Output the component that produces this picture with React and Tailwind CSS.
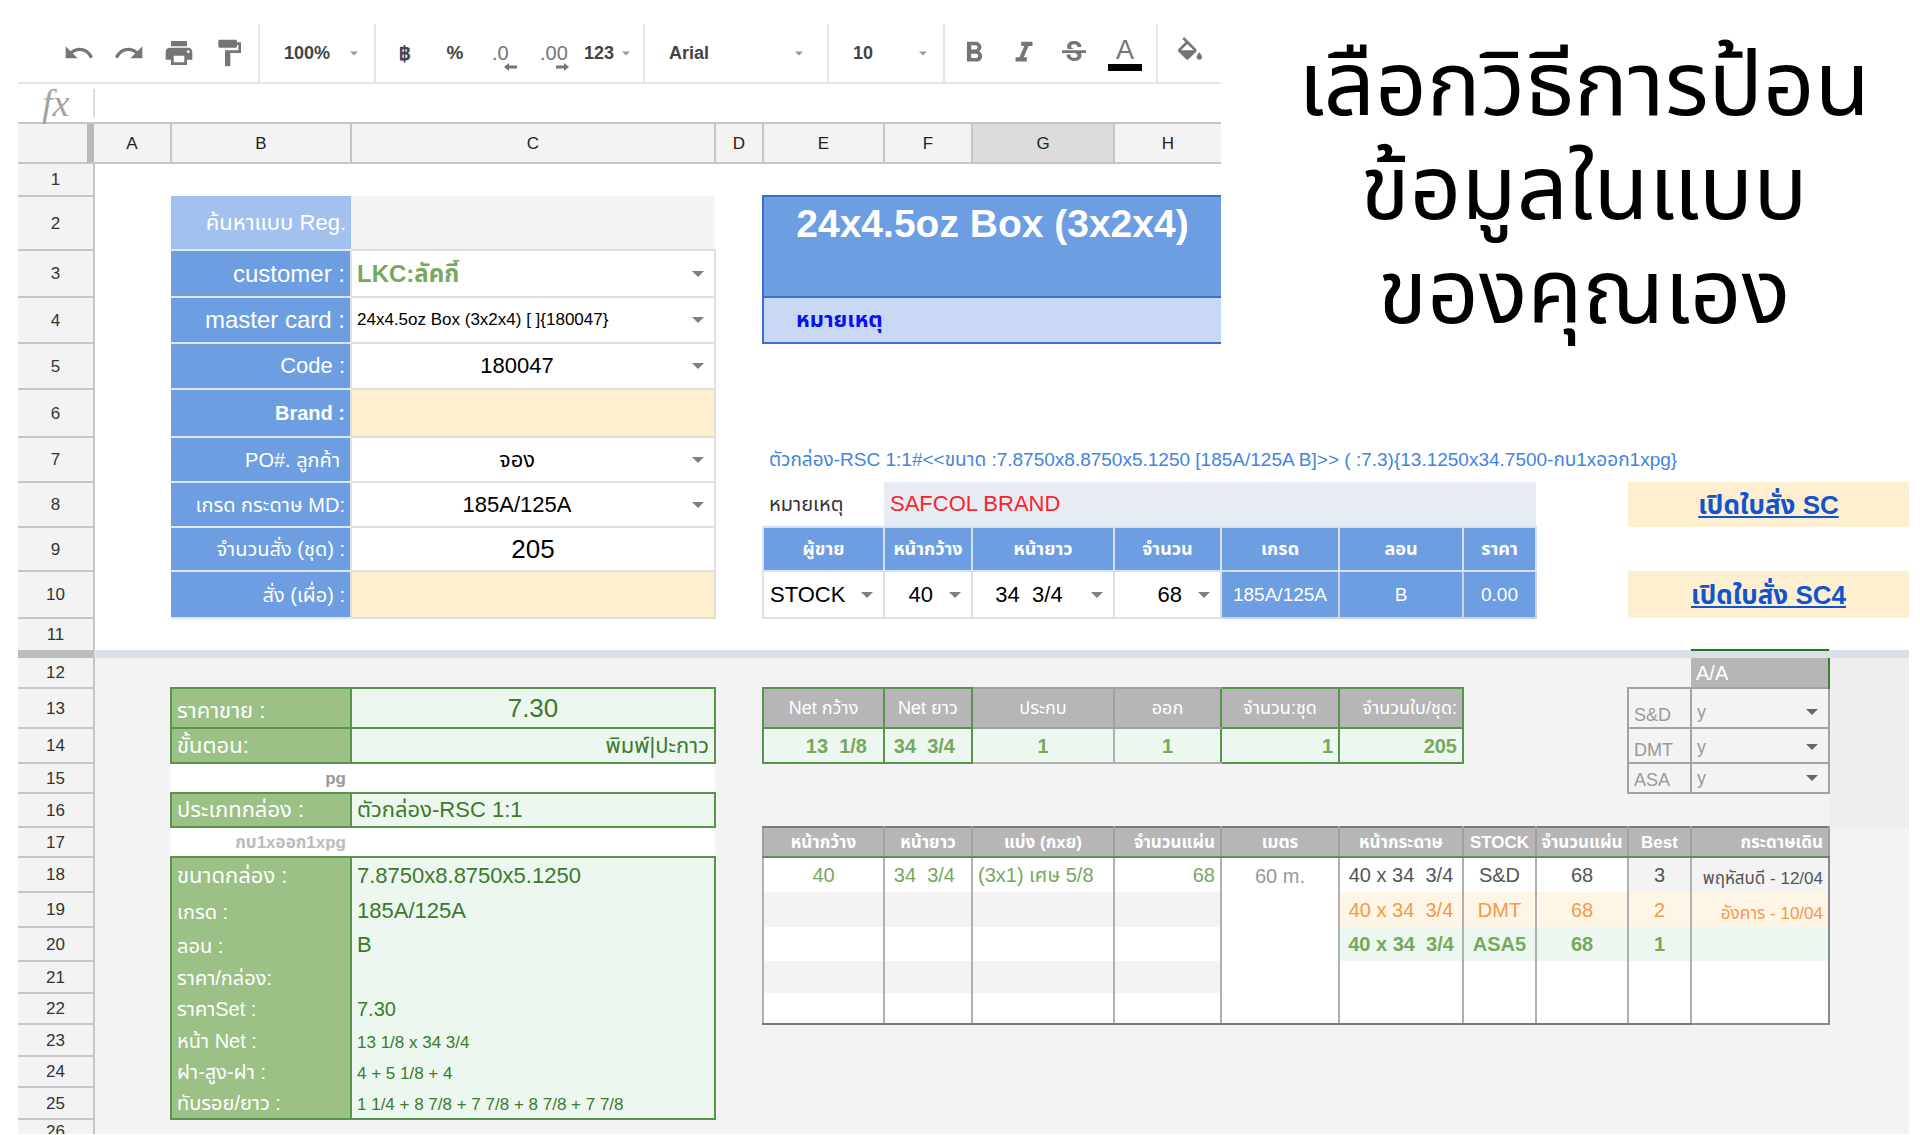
import React from "react";
import {
  MdPrint, MdFormatPaint, MdFormatBold, MdFormatItalic, MdStrikethroughS
} from "react-icons/md";

const columns = [
  { name: "A", width: "w-[77px]" },
  { name: "B", width: "w-[180px]" },
  { name: "C", width: "w-[364px]" },
  { name: "D", width: "w-[48px]" },
  { name: "E", width: "w-[121px]" },
  { name: "F", width: "w-[88px]" },
  { name: "G", width: "w-[142px]", selected: true },
  { name: "H", width: "w-[107px]" },
  { name: "I", width: "w-[118px]" },
  { name: "J", width: "w-[124px]" },
  { name: "K", width: "w-[73px]" },
  { name: "L", width: "w-[92px]" },
  { name: "M", width: "w-[63px]" },
  { name: "N", width: "w-[138px]" },
  { name: "O", width: "w-[80px]" },
];

const blueLabel = "bg-[#6c9ee1] text-white text-right pr-[5px] border-y-2 border-[#dde8f8]";
const blueHead = "bg-[#6c9ee1] text-white text-center font-bold text-[18px] border-2 border-[#d5e1f4]";
const blueCell = "bg-[#6c9ee1] text-white text-center text-[19px] border-2 border-[#c9d3e2]";
const whiteCell = "bg-white p-0 border-2 border-[#e0e0e0]";
const creamCell = "bg-[#feefd1] p-0 border-2 border-[#e3ddd0]";
const greenLabel = "bg-[#9cc187] text-white px-[5px] pb-[5px] align-bottom";
const greenValue = "bg-[#ecf7ef] text-[#3c7a2c] px-[5px] pb-[5px] align-bottom";
const greenBox = "border-2 border-[#5a9350]";
const greenSides = "border-x-2 border-[#5a9350]";
const greyHead = "bg-[#b6b6b6] text-white text-[18px]";
const netValue = "bg-[#ecf7ef] text-[#76a85f] font-bold text-[20px]";
const sheetHead = "bg-[#b6b6b6] text-white text-[17px] font-bold border-x-2 border-x-[#a0a0a0] border-t-2 border-t-[#7a7a7a] border-b-2 border-b-[#5f9154]";
const sheetCell = "border-x-2 border-[#b0b0b0] text-[20px] whitespace-pre";
const supplierName = "border-2 border-[#a3a3a3] text-[#999] text-[18px] px-[5px] pb-[3px] align-bottom";
const dateCell = "border-x-2 border-[#8a8a8a] text-right pr-[5px] pb-[5px] align-bottom text-[17px] whitespace-nowrap";

function Caret({ className }) {
  return (
    <svg viewBox="0 0 12 6" className={`pointer-events-none ${className}`} fill="currentColor" aria-hidden="true">
      <path d="M0 0h12L6 6z" />
    </svg>
  );
}

function CellSelect({ id, label, value, className, caret = "text-[#7f7f7f]" }) {
  return (
    <div className="relative flex items-center">
      <select id={id} aria-label={label} defaultValue={value}
        className={`block w-full appearance-none bg-transparent leading-7 outline-none whitespace-pre ${className}`}>
        <option value={value}>{value}</option>
      </select>
      <Caret className={`absolute right-[10px] w-3 h-[6px] ${caret}`} />
    </div>
  );
}

function Row({ n, height, className = "", children }) {
  return (
    <tr className={`${height} ${className}`}>
      <th scope="row" className="bg-[#f3f3f3] text-[#333] text-[17px] font-normal border-b-2 border-r-2 border-[#c6c6c6]">{n}</th>
      {children}
    </tr>
  );
}

function Group({ className = "", children }) {
  return <div className={`flex items-center shrink-0 border-r-2 border-[#e5e5e5] ${className}`}>{children}</div>;
}

function ToolButton({ label, className = "", children }) {
  return (
    <button type="button" aria-label={label} className={`flex items-center shrink-0 ${className}`}>
      {children}
    </button>
  );
}

function Toolbar() {
  return (
    <div className="flex h-[60px] border-b-2 border-[#e5e5e5] text-[#757575] text-[18px] overflow-hidden">
      <Group className="w-[242px] pl-9">
        <ToolButton label="Undo" className="w-[50px] justify-center">
          <svg viewBox="0 0 24 24" className="w-8 h-8" fill="currentColor">
            <path d="M12.500 8c-2.650 0-5.050.99-6.900 2.600L2 7v9h9l-3.620-3.620c1.390-1.160 3.160-1.880 5.120-1.880 3.540 0 6.550 2.310 7.600 5.500l2.370-.78C21.080 11.030 17.150 8 12.500 8z" />
          </svg>
        </ToolButton>
        <ToolButton label="Redo" className="w-[50px] justify-center">
          <svg viewBox="0 0 24 24" className="w-8 h-8" fill="currentColor">
            <path d="M18.400 10.600C16.550 8.990 14.150 8 11.500 8c-4.650 0-8.580 3.030-9.960 7.220L3.900 16c1.050-3.190 4.050-5.500 7.600-5.500 1.950 0 3.730.72 5.120 1.880L13 16h9V7l-3.600 3.600z" />
          </svg>
        </ToolButton>
        <ToolButton label="Print" className="w-[50px] justify-center"><MdPrint size={32} /></ToolButton>
        <ToolButton label="Paint format" className="w-[50px] justify-center"><MdFormatPaint size={32} /></ToolButton>
      </Group>
      <Group className="w-[116px] pl-6">
        <ToolButton label="Zoom" className="gap-5 font-bold text-[#444]">
          100%<Caret className="w-2 h-[5px] text-[#999]" />
        </ToolButton>
      </Group>
      <Group className="w-[269px] pl-1">
        <ToolButton label="Currency" className="w-[50px] justify-center font-bold text-[22px] text-[#445]">฿</ToolButton>
        <ToolButton label="Percent" className="w-[50px] justify-center font-bold text-[19px] text-[#444]">%</ToolButton>
        <ToolButton label="Decrease decimal places" className="relative w-12 pl-3 text-[20px]">
          .0
          <svg viewBox="0 0 13 8" className="absolute left-6 top-[25px] w-[13px] h-2" fill="currentColor"><path d="M0 4l5-4v2.500h8v3H5V8z" /></svg>
        </ToolButton>
        <ToolButton label="Increase decimal places" className="relative w-14 pl-3 text-[20px]">
          .00
          <svg viewBox="0 0 13 8" className="absolute left-7 top-[25px] w-[13px] h-2" fill="currentColor"><path d="M13 4L8 0v2.500H0v3h8V8z" /></svg>
        </ToolButton>
        <ToolButton label="More formats" className="gap-2 font-bold text-[#444]">
          123<Caret className="w-2 h-[5px] text-[#999]" />
        </ToolButton>
      </Group>
      <Group className="w-[184px] pl-6 pr-6">
        <ToolButton label="Font" className="grow justify-between font-bold text-[#444]">
          Arial<Caret className="w-2 h-[5px] text-[#999]" />
        </ToolButton>
      </Group>
      <Group className="w-[116px] pl-6 pr-4">
        <ToolButton label="Font size" className="grow justify-between font-bold text-[#444]">
          10<Caret className="w-2 h-[5px] text-[#999]" />
        </ToolButton>
      </Group>
      <Group className="w-[213px] pl-1">
        <ToolButton label="Bold" className="w-[50px] justify-center"><MdFormatBold size={34} /></ToolButton>
        <ToolButton label="Italic" className="w-[50px] justify-center"><MdFormatItalic size={34} /></ToolButton>
        <ToolButton label="Strikethrough" className="w-[50px] justify-center"><MdStrikethroughS size={32} /></ToolButton>
        <ToolButton label="Text color" className="w-[52px] flex-col">
          <span className="text-[27px] leading-7">A</span>
          <span className="w-[34px] h-[7px] bg-black" />
        </ToolButton>
      </Group>
      <ToolButton label="Fill color" className="pl-4 pb-2">
        <svg viewBox="0 0 24 18" className="w-8 h-6" fill="currentColor">
          <path d="M16.560 8.940L7.620 0 6.210 1.410l2.380 2.380-5.150 5.150c-.59.59-.59 1.540 0 2.120l5.500 5.500c.29.29.68.44 1.060.44s.77-.15 1.060-.44l5.500-5.500c.59-.58.59-1.530 0-2.120zM5.210 10L10 5.210 14.790 10H5.210zM19 11.500s-2 2.170-2 3.500c0 1.100.9 2 2 2s2-.9 2-2c0-1.330-2-3.500-2-3.500z" />
        </svg>
      </ToolButton>
    </div>
  );
}

function FormulaBar() {
  return (
    <div className="flex items-center h-[38px]">
      <label htmlFor="formula" className="w-[75px] pl-6 font-['Liberation_Serif',serif] italic text-[38px] leading-8 text-[#a3a3a3]">fx</label>
      <input id="formula" className="grow h-7 border-l-2 border-[#dcdcdc] px-2 outline-none" />
    </div>
  );
}

function FrozenRows() {
  return (
    <>
      <Row n="1" height="h-[33px]"><td colSpan={15} /></Row>
      <Row n="2" height="h-[54px]">
        <td />
        <td className="bg-[#a3c1ef] text-white text-right text-[22px] pr-[5px] border-b-2 border-[#dde8f8]"><label htmlFor="search">ค้นหาแบบ Reg.</label></td>
        <td className="bg-[#f3f3f3] p-0"><input id="search" className="block w-full px-2 outline-none text-[22px]" /></td>
        <td />
        <td colSpan={4} rowSpan={2} className="bg-[#6c9ee1] text-white font-bold text-[39px] leading-[45px] text-center align-top pt-1 border-2 border-r-0 border-[#3b6fd0]">24x4.5oz Box (3x2x4)</td>
        <td colSpan={7} rowSpan={2} />
      </Row>
      <Row n="3" height="h-[47px]">
        <td />
        <td className={`${blueLabel} text-[24px]`}><label htmlFor="customer">customer :</label></td>
        <td className={whiteCell}><CellSelect id="customer" value="LKC:ลัคกี้" className="pl-[5px] text-[24px] font-bold text-[#76a85f]" /></td>
        <td />
      </Row>
      <Row n="4" height="h-[46px]">
        <td />
        <td className={`${blueLabel} text-[24px]`}><label htmlFor="master">master card :</label></td>
        <td className={whiteCell}><CellSelect id="master" value="24x4.5oz Box (3x2x4) [ ]{180047}" className="pl-[5px] text-[17px]" /></td>
        <td />
        <td colSpan={4} className="bg-[#c9d9f3] text-[#0a10f0] font-bold text-[22px] pl-8 border-2 border-r-0 border-[#3b6fd0]">หมายเหตุ</td>
        <td colSpan={7} />
      </Row>
      <Row n="5" height="h-[46px]">
        <td />
        <td className={`${blueLabel} text-[22px]`}><label htmlFor="code">Code :</label></td>
        <td className={whiteCell}><CellSelect id="code" value="180047" className="pr-8 text-[22px] [text-align-last:center]" /></td>
        <td colSpan={12} />
      </Row>
      <Row n="6" height="h-[48px]">
        <td />
        <td className={`${blueLabel} text-[20px] font-bold`}><label htmlFor="brand">Brand :</label></td>
        <td className={creamCell}><input id="brand" className="block w-full px-2 outline-none text-[22px]" /></td>
        <td colSpan={12} />
      </Row>
      <Row n="7" height="h-[45px]">
        <td />
        <td className={`${blueLabel} text-[20px]`}><label htmlFor="po" className="pr-[5px]">PO#. ลูกค้า</label></td>
        <td className={whiteCell}><CellSelect id="po" value="จอง" className="pr-8 text-[22px] [text-align-last:center]" /></td>
        <td />
        <td colSpan={11} className="pl-[6px] text-[19px] text-[#3f84df] whitespace-nowrap">
          ตัวกล่อง-RSC 1:1#&lt;&lt;ขนาด :7.8750x8.8750x5.1250 [185A/125A B]&gt;&gt; ( :7.3)&#123;13.1250x34.7500-กบ1xออก1xpg&#125;
        </td>
      </Row>
      <Row n="8" height="h-[45px]">
        <td />
        <td className={`${blueLabel} text-[20px]`}><label htmlFor="grade">เกรด กระดาษ MD:</label></td>
        <td className={whiteCell}><CellSelect id="grade" value="185A/125A" className="pr-8 text-[22px] [text-align-last:center]" /></td>
        <td />
        <td className="pl-[6px] text-[20px] text-[#333]">หมายเหตุ</td>
        <td colSpan={6} className="bg-[#e7ebf3] pl-[6px] text-[22px] text-[#f8262b]">SAFCOL BRAND</td>
        <td />
        <td colSpan={3} className="bg-[#feefd1] text-center text-[26px] font-bold">
          <a href="#sc" className="text-[#1155cc] underline">เปิดใบสั่ง SC</a>
        </td>
      </Row>
      <Row n="9" height="h-[44px]">
        <td />
        <td className={`${blueLabel} text-[20px]`}><label htmlFor="amount">จำนวนสั่ง (ชุด) :</label></td>
        <td className={whiteCell}><input id="amount" defaultValue="205" className="block w-full text-center outline-none text-[26px] leading-8" /></td>
        <td />
        <td className={blueHead}>ผู้ขาย</td>
        <td className={blueHead}>หน้ากว้าง</td>
        <td className={blueHead}>หน้ายาว</td>
        <td className={blueHead}>จำนวน</td>
        <td className={blueHead}>เกรด</td>
        <td className={blueHead}>ลอน</td>
        <td className={blueHead}>ราคา</td>
        <td colSpan={4} />
      </Row>
      <Row n="10" height="h-[47px]">
        <td />
        <td className={`${blueLabel} text-[20px]`}><label htmlFor="spare">สั่ง (เผื่อ) :</label></td>
        <td className={creamCell}><input id="spare" className="block w-full px-2 outline-none text-[22px]" /></td>
        <td />
        <td className={whiteCell}><CellSelect label="ผู้ขาย" value="STOCK" className="pl-[6px] text-[22px]" /></td>
        <td className={whiteCell}><CellSelect label="หน้ากว้าง" value="40" className="pr-[38px] text-[22px] [text-align-last:right]" /></td>
        <td className={whiteCell}><CellSelect label="หน้ายาว" value={"34\u00a0 3/4"} className="pr-7 text-[22px] [text-align-last:center]" /></td>
        <td className={whiteCell}><CellSelect label="จำนวน" value="68" className="pr-[38px] text-[22px] [text-align-last:right]" /></td>
        <td className={blueCell}>185A/125A</td>
        <td className={blueCell}>B</td>
        <td className={blueCell}>0.00</td>
        <td />
        <td colSpan={3} className="bg-[#feefd1] text-center text-[26px] font-bold">
          <a href="#sc4" className="text-[#1155cc] underline">เปิดใบสั่ง SC4</a>
        </td>
      </Row>
      <tr className="h-8">
        <th scope="row" className="bg-[#f3f3f3] text-[#333] text-[17px] font-normal border-r-2 border-[#c6c6c6]">11</th>
        <td colSpan={13} />
        <td className="border-b-2 border-[#1c7a1c]" />
        <td />
      </tr>
    </>
  );
}

function ScrollRows() {
  return (
    <>
      <Row n="12" height="h-[30px]" className="bg-[#f3f3f3]">
        <td colSpan={13} />
        <td className="bg-[#b6b6b6] text-white text-[20px] px-[5px] border-r-2 border-[#3f7f35]">A/A</td>
        <td className="bg-[#eee]" />
      </Row>
      <Row n="13" height="h-[40px]" className="bg-[#f3f3f3]">
        <td />
        <td className={`${greenLabel} ${greenBox} text-[22px]`}>ราคาขาย :</td>
        <td className={`bg-[#ecf7ef] text-[#3c7a2c] text-center text-[26px] ${greenBox}`}>7.30</td>
        <td />
        <td className={`${greyHead} text-center ${greenBox}`}>Net กว้าง</td>
        <td className={`${greyHead} text-center ${greenBox}`}>Net ยาว</td>
        <td className={`${greyHead} text-center border-2 border-[#a0a0a0]`}>ประกบ</td>
        <td className={`${greyHead} text-center border-y-2 border-[#a0a0a0]`}>ออก</td>
        <td className={`${greyHead} text-center ${greenBox}`}>จำนวน:ชุด</td>
        <td className={`${greyHead} text-right pr-[5px] ${greenBox}`}>จำนวนใบ/ชุด:</td>
        <td colSpan={2} />
        <td className={supplierName}>S&amp;D</td>
        <td className="border-2 border-[#a3a3a3] p-0 pb-[1px] align-bottom"><CellSelect label="S&D" value="y" className="pl-[5px] text-[18px] text-[#999]" caret="text-[#666]" /></td>
        <td className="bg-[#eee]" />
      </Row>
      <Row n="14" height="h-[35px]" className="bg-[#f3f3f3]">
        <td />
        <td className={`${greenLabel} ${greenBox} text-[22px]`}>ขั้นตอน:</td>
        <td className={`${greenValue} ${greenBox} text-right text-[22px]`}>พิมพ์|ปะกาว</td>
        <td />
        <td className={`${netValue} ${greenBox} text-right pr-[16px] whitespace-pre`}>13  1/8</td>
        <td className={`${netValue} ${greenBox} text-right pr-[16px] whitespace-pre`}>34  3/4</td>
        <td className={`${netValue} text-center border-2 border-[#b0b0b0]`}>1</td>
        <td className={`${netValue} text-center border-y-2 border-[#b0b0b0]`}>1</td>
        <td className={`${netValue} ${greenBox} text-right pr-[5px]`}>1</td>
        <td className={`${netValue} ${greenBox} text-right pr-[5px]`}>205</td>
        <td colSpan={2} />
        <td className={supplierName}>DMT</td>
        <td className="border-2 border-[#a3a3a3] p-0 pb-[1px] align-bottom"><CellSelect label="DMT" value="y" className="pl-[5px] text-[18px] text-[#999]" caret="text-[#666]" /></td>
        <td className="bg-[#eee]" />
      </Row>
      <Row n="15" height="h-[30px]" className="bg-[#f3f3f3]">
        <td />
        <td className="bg-white text-right text-[17px] font-bold text-[#999] pr-[5px] pb-[5px] align-bottom">pg</td>
        <td className="bg-white" />
        <td colSpan={9} />
        <td className={supplierName}>ASA</td>
        <td className="border-2 border-[#a3a3a3] p-0"><CellSelect label="ASA" value="y" className="pl-[5px] text-[18px] text-[#999]" caret="text-[#666]" /></td>
        <td className="bg-[#eee]" />
      </Row>
      <Row n="16" height="h-[34px]" className="bg-[#f3f3f3]">
        <td />
        <td className={`${greenLabel} ${greenBox} text-[22px]`}>ประเภทกล่อง :</td>
        <td className={`${greenValue} ${greenBox} text-[22px]`}>ตัวกล่อง-RSC 1:1</td>
        <td colSpan={11} />
        <td className="bg-[#eee]" />
      </Row>
      <Row n="17" height="h-[30px]" className="bg-[#f3f3f3]">
        <td />
        <td className="bg-white text-right text-[17px] font-bold text-[#bbb] pr-[5px] pb-[5px] align-bottom">กบ1xออก1xpg</td>
        <td className="bg-white" />
        <td />
        <td className={`${sheetHead} text-center`}>หน้ากว้าง</td>
        <td className={`${sheetHead} text-center`}>หน้ายาว</td>
        <td className={`${sheetHead} text-center`}>แบ่ง (กxย)</td>
        <td className={`${sheetHead} text-right pr-[5px]`}>จำนวนแผ่น</td>
        <td className={`${sheetHead} text-center`}>เมตร</td>
        <td className={`${sheetHead} text-center`}>หน้ากระดาษ</td>
        <td className={`${sheetHead} text-center`}>STOCK</td>
        <td className={`${sheetHead} text-center`}>จำนวนแผ่น</td>
        <td className={`${sheetHead} text-center`}>Best</td>
        <td className={`${sheetHead} text-right pr-[5px]`}>กระดาษเดิน</td>
        <td />
      </Row>
      <Row n="18" height="h-[35px]" className="bg-[#f3f3f3]">
        <td />
        <td className={`${greenLabel} ${greenSides} border-t-2 text-[22px]`}>ขนาดกล่อง :</td>
        <td className={`${greenValue} ${greenSides} border-t-2 text-[22px]`}>7.8750x8.8750x5.1250</td>
        <td />
        <td className={`${sheetCell} bg-white text-center text-[#76a85f]`}>40</td>
        <td className={`${sheetCell} bg-white text-right pr-[16px] text-[#76a85f]`}>34  3/4</td>
        <td className={`${sheetCell} bg-white pl-[5px] text-[#76a85f]`}>(3x1) เศษ 5/8</td>
        <td className={`${sheetCell} bg-white text-right pr-[5px] text-[#76a85f]`}>68</td>
        <td rowSpan={5} className={`${sheetCell} bg-white text-center align-top pt-2 text-[#999] border-b-2 border-b-[#7a7a7a]`}>60 m.</td>
        <td className={`${sheetCell} bg-white text-center text-[#555]`}>40 x 34  3/4</td>
        <td className={`${sheetCell} bg-white text-center text-[#555]`}>S&amp;D</td>
        <td className={`${sheetCell} bg-white text-center text-[#555]`}>68</td>
        <td className={`${sheetCell} text-center text-[#555]`}>3</td>
        <td className={`${dateCell} text-[#555]`}>พฤหัสบดี - 12/04</td>
        <td />
      </Row>
      <Row n="19" height="h-[35px]" className="bg-[#f3f3f3]">
        <td />
        <td className={`${greenLabel} ${greenSides} text-[20px]`}>เกรด :</td>
        <td className={`${greenValue} ${greenSides} text-[22px]`}>185A/125A</td>
        <td />
        <td className={sheetCell} />
        <td className={sheetCell} />
        <td className={sheetCell} />
        <td className={sheetCell} />
        <td className={`${sheetCell} bg-[#fdf5e6] text-center text-[#f6994a]`}>40 x 34  3/4</td>
        <td className={`${sheetCell} bg-[#fdf5e6] text-center text-[#f6994a]`}>DMT</td>
        <td className={`${sheetCell} bg-[#fdf5e6] text-center text-[#f6994a]`}>68</td>
        <td className={`${sheetCell} bg-[#fdf5e6] text-center text-[#f6994a]`}>2</td>
        <td className={`${dateCell} bg-[#fdf5e6] text-[#f6994a]`}>อังคาร - 10/04</td>
        <td />
      </Row>
      <Row n="20" height="h-[34px]" className="bg-[#f3f3f3]">
        <td />
        <td className={`${greenLabel} ${greenSides} text-[20px]`}>ลอน :</td>
        <td className={`${greenValue} ${greenSides} text-[22px]`}>B</td>
        <td />
        <td className={`${sheetCell} bg-white`} />
        <td className={`${sheetCell} bg-white`} />
        <td className={`${sheetCell} bg-white`} />
        <td className={`${sheetCell} bg-white`} />
        <td className={`${sheetCell} bg-[#ecf7ef] text-center font-bold text-[#76a85f]`}>40 x 34  3/4</td>
        <td className={`${sheetCell} bg-[#ecf7ef] text-center font-bold text-[#76a85f]`}>ASA5</td>
        <td className={`${sheetCell} bg-[#ecf7ef] text-center font-bold text-[#76a85f]`}>68</td>
        <td className={`${sheetCell} bg-[#ecf7ef] text-center font-bold text-[#76a85f]`}>1</td>
        <td className="border-x-2 border-[#8a8a8a] bg-[#ecf7ef]" />
        <td />
      </Row>
      <Row n="21" height="h-[32px]" className="bg-[#f3f3f3]">
        <td />
        <td className={`${greenLabel} ${greenSides} text-[20px]`}>ราคา/กล่อง:</td>
        <td className={`${greenValue} ${greenSides}`} />
        <td />
        <td className={sheetCell} />
        <td className={sheetCell} />
        <td className={sheetCell} />
        <td className={sheetCell} />
        <td rowSpan={2} className={`${sheetCell} bg-white border-b-2 border-b-[#7a7a7a]`} />
        <td rowSpan={2} className={`${sheetCell} bg-white border-b-2 border-b-[#7a7a7a]`} />
        <td rowSpan={2} className={`${sheetCell} bg-white border-b-2 border-b-[#7a7a7a]`} />
        <td rowSpan={2} className={`${sheetCell} bg-white border-b-2 border-b-[#7a7a7a]`} />
        <td rowSpan={2} className="border-x-2 border-b-2 border-[#8a8a8a] bg-white" />
        <td />
      </Row>
      <Row n="22" height="h-[31px]" className="bg-[#f3f3f3]">
        <td />
        <td className={`${greenLabel} ${greenSides} text-[20px]`}>ราคาSet :</td>
        <td className={`${greenValue} ${greenSides} text-[20px]`}>7.30</td>
        <td />
        <td className={`${sheetCell} bg-white border-b-2 border-b-[#7a7a7a]`} />
        <td className={`${sheetCell} bg-white border-b-2 border-b-[#7a7a7a]`} />
        <td className={`${sheetCell} bg-white border-b-2 border-b-[#7a7a7a]`} />
        <td className={`${sheetCell} bg-white border-b-2 border-b-[#7a7a7a]`} />
        <td />
      </Row>
      <Row n="23" height="h-[32px]" className="bg-[#f3f3f3]">
        <td />
        <td className={`${greenLabel} ${greenSides} text-[20px]`}>หน้า Net :</td>
        <td className={`${greenValue} ${greenSides} text-[17px]`}>13 1/8 x 34 3/4</td>
        <td colSpan={12} />
      </Row>
      <Row n="24" height="h-[31px]" className="bg-[#f3f3f3]">
        <td />
        <td className={`${greenLabel} ${greenSides} text-[20px]`}>ฝา-สูง-ฝา :</td>
        <td className={`${greenValue} ${greenSides} text-[17px]`}>4 + 5 1/8 + 4</td>
        <td colSpan={12} />
      </Row>
      <Row n="25" height="h-[32px]" className="bg-[#f3f3f3]">
        <td />
        <td className={`${greenLabel} ${greenSides} border-b-2 text-[20px]`}>ทับรอย/ยาว :</td>
        <td className={`${greenValue} ${greenSides} border-b-2 text-[17px]`}>1 1/4 + 8 7/8 + 7 7/8 + 8 7/8 + 7 7/8</td>
        <td colSpan={12} />
      </Row>
      {/* last row is cut by the bottom edge of the pane */}
      <tr className="bg-[#f3f3f3]">
        <th scope="row" className="p-0 text-[#333] text-[17px] font-normal border-r-2 border-[#c6c6c6]">
          <div className="h-[14px] overflow-hidden leading-6">26</div>
        </th>
        <td colSpan={15} />
      </tr>
    </>
  );
}

export default function App() {
  return (
    <div className="relative bg-white pt-6 pl-[18px] pr-[11px] pb-[2px] overflow-hidden font-['Liberation_Sans','Noto_Sans_Thai',sans-serif] text-black">
      <header className="w-[1202px] max-w-[64%]">
        <Toolbar />
        <FormulaBar />
      </header>
      <h1 className="absolute top-8 right-0 w-[35%] text-center text-[90px] leading-[104px] whitespace-nowrap">
        เลือกวิธีการป้อน<br />ข้อมูลในแบบ<br />ของคุณเอง
      </h1>
      <table className="w-full table-fixed border-collapse leading-none">
        <colgroup>
          <col className="w-[76px]" />
          {columns.map((col) => <col key={col.name} className={col.width} />)}
        </colgroup>
        <thead>
          <tr className="h-10">
            <th className="bg-[#f3f3f3] border-y-2 border-[#c6c6c6] shadow-[inset_-7px_0_0_#b9b9b9]" />
            {columns.slice(0, 8).map((col) => (
              <th key={col.name} scope="col"
                className={`text-[17px] font-normal text-[#222] border-y-2 border-[#c6c6c6] ${col.name === "H" ? "" : "border-r-2"} ${col.selected ? "bg-[#dcdcdc]" : "bg-[#f3f3f3]"}`}>
                {col.name}
              </th>
            ))}
            <td colSpan={7} />
          </tr>
        </thead>
        <tbody>
          <FrozenRows />
          <tr className="h-2">
            <td className="bg-[#bcbcbc] p-0" />
            <td colSpan={15} className="bg-[#dadfe9] p-0" />
          </tr>
          <ScrollRows />
        </tbody>
      </table>
    </div>
  );
}
